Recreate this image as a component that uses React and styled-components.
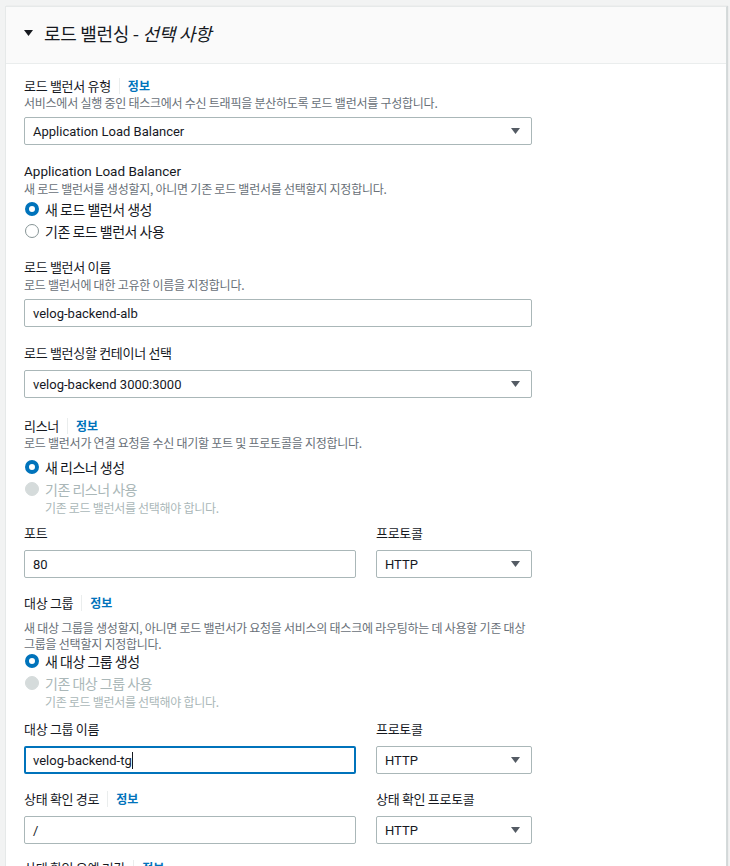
import React from "react";
import styled, { createGlobalStyle } from "styled-components";

const GlobalStyle = createGlobalStyle`
  body {
    margin: 0;
    background: #f2f3f3;
    font-family: Roboto, "Noto Sans CJK KR", sans-serif;
    color: #16191f;
  }
`;

const KO = `"Noto Sans CJK KR", Roboto, sans-serif`;

const Caret = ({ color = "#545b64" }) => (
  <svg width="9" height="6" viewBox="0 0 9 6">
    <path d="M0 0 L9 0 L4.5 6 Z" fill={color} />
  </svg>
);

const Select = ({ value }) => (
  <SelectBox>
    <span>{value}</span>
    <Caret />
  </SelectBox>
);

const Input = ({ value, focused }) => (
  <InputBox $focused={focused}>
    {value}
    {focused && <Cursor />}
  </InputBox>
);

const Radio = ({ state, children, hint }) => (
  <div>
    <RadioRow $disabled={state === "disabled"}>
      <RadioDot $state={state} />
      {children}
    </RadioRow>
    {hint && <Hint>{hint}</Hint>}
  </div>
);

const FieldHead = ({ label, info, desc, latin, descGap }) => (
  <Head>
    <Label $latin={latin}>
      {label}
      {info && <Info>정보</Info>}
    </Label>
    {desc && <Desc $mt={descGap}>{desc}</Desc>}
  </Head>
);

const App = () => {
  return (
    <Page>
      <GlobalStyle />
      <Card>
        <Header>
          <Caret color="#16191f" />
          <Title>
            로드 밸런싱 - <em>선택 사항</em>
          </Title>
        </Header>
        <Body>
          <Field $gap={0}>
            <FieldHead
              label="로드 밸런서 유형"
              info
              descGap={1}
              desc="서비스에서 실행 중인 태스크에서 수신 트래픽을 분산하도록 로드 밸런서를 구성합니다."
            />
            <Select value="Application Load Balancer" />
          </Field>

          <Field $gap={18}>
            <FieldHead
              latin
              label="Application Load Balancer"
              descGap={2}
              desc="새 로드 밸런서를 생성할지, 아니면 기존 로드 밸런서를 선택할지 지정합니다."
            />
            <RadioGroup $mt={-5}>
              <Radio state="checked">새 로드 밸런서 생성</Radio>
              <Radio state="off">기존 로드 밸런서 사용</Radio>
            </RadioGroup>
          </Field>

          <Field $gap={17}>
            <FieldHead
              label="로드 밸런서 이름"
              descGap={2}
              desc="로드 밸런서에 대한 고유한 이름을 지정합니다."
            />
            <Input value="velog-backend-alb" />
          </Field>

          <Field $gap={18}>
            <FieldHead label="로드 밸런싱할 컨테이너 선택" />
            <Select value="velog-backend 3000:3000" />
          </Field>

          <Field $gap={20}>
            <FieldHead
              label="리스너"
              info
              descGap={1}
              desc="로드 밸런서가 연결 요청을 수신 대기할 포트 및 프로토콜을 지정합니다."
            />
            <RadioGroup $mt={-1}>
              <Radio state="checked">새 리스너 생성</Radio>
              <Radio state="disabled" hint="기존 로드 밸런서를 선택해야 합니다.">
                기존 리스너 사용
              </Radio>
            </RadioGroup>
          </Field>

          <Pair $gap={10}>
            <Field $gap={0}>
              <FieldHead label="포트" />
              <Input value="80" />
            </Field>
            <Field $gap={0}>
              <FieldHead label="프로토콜" />
              <Select value="HTTP" />
            </Field>
          </Pair>

          <Field $gap={17}>
            <FieldHead
              label="대상 그룹"
              info
              descGap={9}
              desc={
                <>
                  새 대상 그룹을 생성할지, 아니면 로드 밸런서가 요청을 서비스의
                  태스크에 라우팅하는 데 사용할 기존 대상
                  <br />
                  그룹을 선택할지 지정합니다.
                </>
              }
            />
            <RadioGroup $mt={-8}>
              <Radio state="checked">새 대상 그룹 생성</Radio>
              <Radio state="disabled" hint="기존 로드 밸런서를 선택해야 합니다.">
                기존 대상 그룹 사용
              </Radio>
            </RadioGroup>
          </Field>

          <Pair $gap={12}>
            <Field $gap={0}>
              <FieldHead label="대상 그룹 이름" />
              <Input value="velog-backend-tg" focused />
            </Field>
            <Field $gap={0}>
              <FieldHead label="프로토콜" />
              <Select value="HTTP" />
            </Field>
          </Pair>

          <Pair $gap={17}>
            <Field $gap={0}>
              <FieldHead label="상태 확인 경로" info />
              <Input value="/" />
            </Field>
            <Field $gap={0}>
              <FieldHead label="상태 확인 프로토콜" />
              <Select value="HTTP" />
            </Field>
          </Pair>

          <Field $gap={16}>
            <FieldHead label="상태 확인 유예 기간" info />
          </Field>
        </Body>
      </Card>
    </Page>
  );
};

const Page = styled.div`
  padding: 6px 3px 0 5px;
  height: 866px;
  box-sizing: border-box;
  overflow: hidden;
`;

const Card = styled.div`
  background: #fff;
  border: 1px solid #e6e9e9;
  border-right-color: #d5dbdb;
  box-shadow: 1px 0 1px rgba(0, 28, 36, 0.12);
  min-height: 900px;
`;

const Header = styled.div`
  height: 57px;
  box-sizing: border-box;
  background: #fafafa;
  border-bottom: 1px solid #eaeded;
  display: flex;
  align-items: center;
  gap: 11px;
  padding: 0 0 4px 18px;
`;

const Title = styled.h2`
  margin: 0;
  font-family: ${KO};
  font-size: 18px;
  font-weight: 400;
  letter-spacing: -0.3px;
  line-height: 24px;
  color: #16191f;

  em {
    font-style: italic;
  }
`;

const Body = styled.div`
  padding: 14px 18px 0;
  display: flex;
  flex-direction: column;
  width: 508px;
`;

const Field = styled.div`
  margin-top: ${(p) => p.$gap}px;
`;

const Pair = styled.div`
  display: grid;
  grid-template-columns: 332px 156px;
  column-gap: 20px;
  margin-top: ${(p) => p.$gap}px;
`;

const Head = styled.div`
  margin-bottom: 6px;
`;

const Label = styled.div`
  display: flex;
  align-items: center;
  height: 16px;
  font-family: ${(p) => (p.$latin ? "Roboto, sans-serif" : KO)};
  font-size: ${(p) => (p.$latin ? 13.5 : 13)}px;
  letter-spacing: ${(p) => (p.$latin ? 0 : -0.3)}px;
  line-height: 16px;
  color: #16191f;

  &:last-child {
    padding-bottom: 3px;
  }
`;

const Info = styled.span`
  margin-left: 8px;
  padding-left: 8px;
  border-left: 1px solid #eaeded;
  line-height: 16px;
  font-size: 12px;
  font-weight: 700;
  letter-spacing: 0;
  color: #0073bb;
`;

const Desc = styled.div`
  margin-top: ${(p) => (p.$mt === undefined ? 0 : p.$mt)}px;
  font-family: ${KO};
  font-size: 12px;
  letter-spacing: -0.25px;
  line-height: 16px;
  color: #687078;
`;

const controlBase = `
  box-sizing: border-box;
  height: 28px;
  border-radius: 2px;
  background: #fff;
  font-family: Roboto, sans-serif;
  font-size: 13px;
  color: #16191f;
  display: flex;
  align-items: center;
`;

const SelectBox = styled.div`
  ${controlBase}
  border: 1px solid #aab7b8;
  padding: 0 11px 0 8px;
  justify-content: space-between;
`;

const InputBox = styled.div`
  ${controlBase}
  border: ${(p) => (p.$focused ? "2px solid #0073bb" : "1px solid #aab7b8")};
  padding-left: ${(p) => (p.$focused ? 7 : 8)}px;
`;

const Cursor = styled.span`
  display: inline-block;
  width: 1px;
  height: 17px;
  background: #16191f;
`;

const RadioGroup = styled.div`
  margin-top: ${(p) => p.$mt}px;
`;

const RadioRow = styled.label`
  display: flex;
  align-items: center;
  gap: 6px;
  height: 22px;
  font-family: ${KO};
  font-size: 14px;
  letter-spacing: -0.5px;
  line-height: 22px;
  color: ${(p) => (p.$disabled ? "#aab7b8" : "#16191f")};
`;

const RadioDot = styled.span`
  box-sizing: border-box;
  width: 14px;
  height: 14px;
  margin-left: 1px;
  border-radius: 50%;
  flex: none;
  background: ${(p) => (p.$state === "disabled" ? "#d5dbdb" : "#fff")};
  border: ${(p) =>
    p.$state === "checked"
      ? "4px solid #0073bb"
      : p.$state === "disabled"
      ? "1px solid #d5dbdb"
      : "1px solid #879596"};
`;

const Hint = styled.div`
  margin-left: 21px;
  font-family: ${KO};
  font-size: 12px;
  letter-spacing: -0.3px;
  line-height: 15px;
  color: #aab7b8;
`;

export default App;
